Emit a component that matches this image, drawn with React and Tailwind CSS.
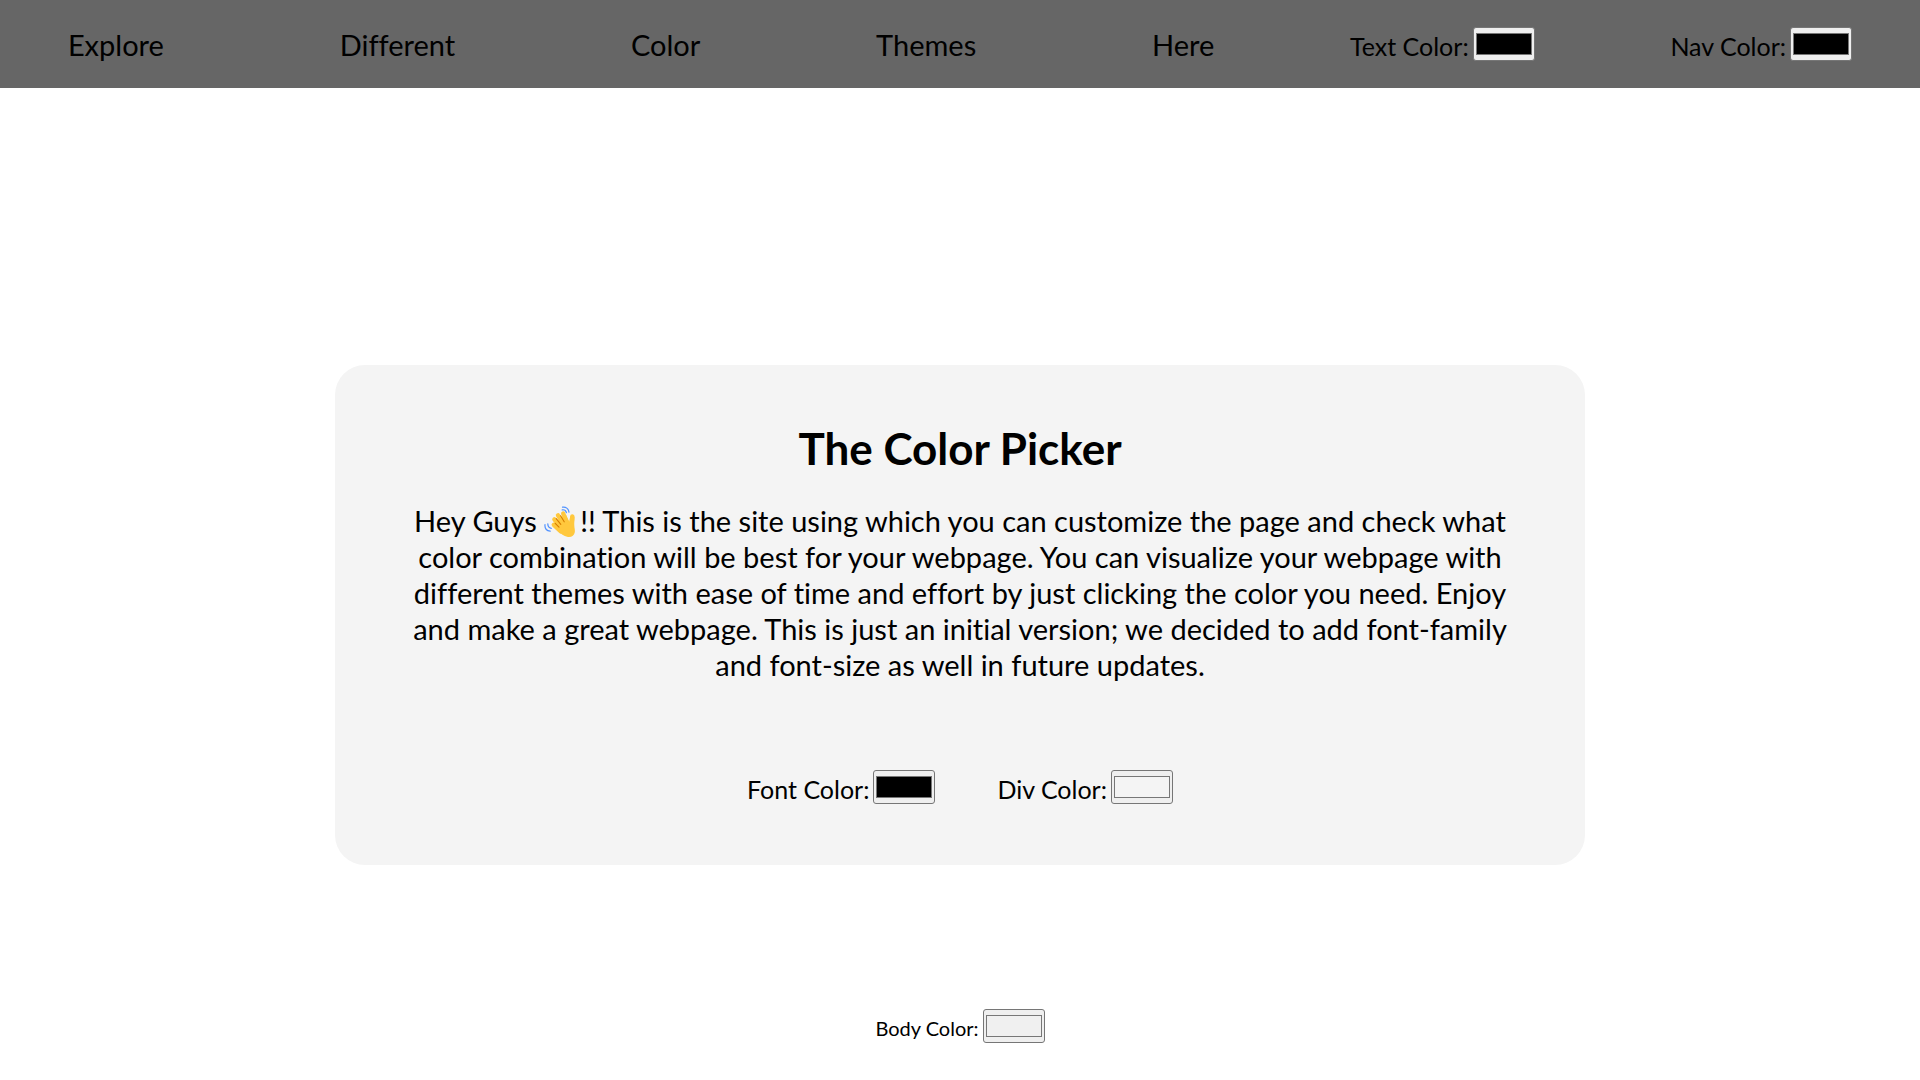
import { useId, useState } from "react";

const LINKS = ["Explore", "Different", "Color", "Themes", "Here"];

function ColorField({ label, value, onChange, className }) {
  const id = useId();
  return (
    <div className={`flex items-start gap-1 whitespace-nowrap ${className}`}>
      <label htmlFor={id} className="pt-[3px]">
        {label}
      </label>
      <input
        id={id}
        type="color"
        value={value}
        onChange={(event) => onChange(event.target.value)}
        className="h-[34px] w-[62px] cursor-pointer appearance-none rounded-[3px] border border-[#767676] bg-[#efefef] px-[2px] py-px [&::-webkit-color-swatch-wrapper]:px-0 [&::-webkit-color-swatch-wrapper]:py-1 [&::-webkit-color-swatch]:border [&::-webkit-color-swatch]:border-[#777777]"
      />
    </div>
  );
}

function WavingHand() {
  return (
    <svg viewBox="0 0 32 32" role="img" aria-label="Waving hand" className="mr-1 inline-block size-8 align-[-6px]">
      <g fill="none" stroke="#ffc83d" strokeWidth="4.4" strokeLinecap="round" strokeLinejoin="round">
        <path d="M9.800 18.800l7 6.500M10.400 13.400l8.500 9M14 9.400l7 11M19.200 7.600l5 11.500M28.300 10.400l-.8 9" />
      </g>
      <path
        d="M12 19l3-6 7-4 3.200 6.800c.4-1.900.7-3.300 1-5.200l4.300.1c.2 3-.4 6-.2 8.700.1 2.700.9 4.500.5 6.900-.6 3.400-3.500 5.300-6.900 4.700-4.400-.8-7.600-3.800-10.600-7z"
        fill="#ffc83d"
      />
      <g fill="none" stroke="#d67d00" strokeWidth="1.100" strokeLinecap="round">
        <path d="M11.200 17.300l3.800 3.900M12.200 12.600l4.600 5.800M16.600 9.800l3.600 6" />
      </g>
      <g fill="none" stroke="#5092ff" strokeWidth="1.200" strokeLinecap="round">
        <path d="M18.500 1.200c3.300-.6 6 1.400 6.500 4.900M18.200 3.800c2.200-.3 3.700.8 4.200 2.800" />
        <path d="M1 18.500c-.4 3.700 1.800 6.200 5.200 6.600M3.800 17.800c0 2.600 1.200 4.100 3.500 4.600" />
      </g>
    </svg>
  );
}

export default function App() {
  const [text, setText] = useState("#000000");
  const [nav, setNav] = useState("#000000");
  const [font, setFont] = useState("#000000");
  const [card, setCard] = useState("#f4f4f4");
  const [body, setBody] = useState("#f0f0f0");

  return (
    <div className="flex min-h-screen flex-col bg-white font-['Gill_Sans','Gill_Sans_MT',Lato,sans-serif] text-black [font-variant-ligatures:no-common-ligatures]">
      <nav className="flex h-22 items-center justify-around bg-[#666666] pt-px">
        {LINKS.map((name) => (
          <a key={name} href="#" className="mr-10 text-[29px] leading-9 nth-5:mr-0">
            {name}
          </a>
        ))}
        <ColorField label="Text Color:" value={text} onChange={setText} className="text-[25px] leading-8" />
        <ColorField label="Nav Color:" value={nav} onChange={setNav} className="text-[25px] leading-8" />
      </nav>

      <main className="flex flex-1 flex-col items-center pt-[277px]">
        <section className="flex min-h-[500px] w-full max-w-[1250px] flex-col items-center rounded-[30px] bg-[#f4f4f4] px-16 pt-[59px]">
          <h1 className="text-[44px] leading-12 font-bold">The Color Picker</h1>
          <p className="mt-[31px] text-center text-[29px] leading-9">
            Hey Guys <WavingHand />
            !! This is the site using which you can customize the page and check what
            color combination will be best for your webpage. You can visualize your webpage with
            different themes with ease of time and effort by just clicking the color you need. Enjoy
            and make a great webpage. This is just an initial version; we decided to add font-family
            and font-size as well in future updates.
          </p>
          <div className="mt-[87px] flex justify-center gap-[62px]">
            <ColorField label="Font Color:" value={font} onChange={setFont} className="text-[25px] leading-8" />
            <ColorField label="Div Color:" value={card} onChange={setCard} className="text-[25px] leading-8" />
          </div>
        </section>

        <ColorField label="Body Color:" value={body} onChange={setBody} className="mt-36 text-xl leading-8" />
      </main>
    </div>
  );
}
